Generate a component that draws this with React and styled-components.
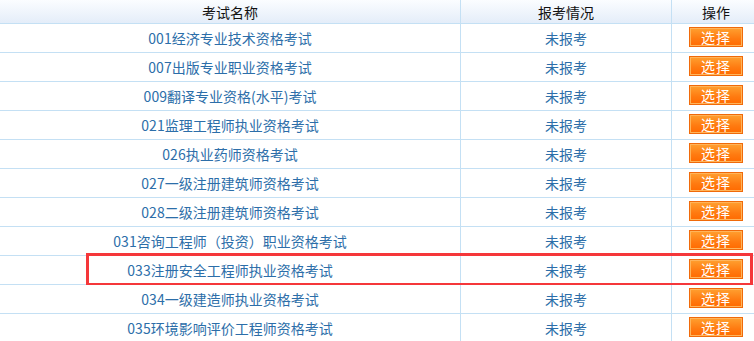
import React from "react";
import styled, { createGlobalStyle } from "styled-components";

const exams = [
  "001经济专业技术资格考试",
  "007出版专业职业资格考试",
  "009翻译专业资格(水平)考试",
  "021监理工程师执业资格考试",
  "026执业药师资格考试",
  "027一级注册建筑师资格考试",
  "028二级注册建筑师资格考试",
  "031咨询工程师（投资）职业资格考试",
  "033注册安全工程师执业资格考试",
  "034一级建造师执业资格考试",
  "035环境影响评价工程师资格考试",
];

export default function App() {
  return (
    <>
      <GlobalStyle />
      <Table>
        <Row $head>
          <Cell>考试名称</Cell>
          <Cell>报考情况</Cell>
          <Cell>操作</Cell>
        </Row>
        {exams.map((name, i) => (
          <Row key={name}>
            <Cell $link>{name}</Cell>
            <Cell $link>未报考</Cell>
            <Cell>
              <PickButton>选择</PickButton>
            </Cell>
            {i === 8 && <Highlight />}
          </Row>
        ))}
      </Table>
    </>
  );
}

const GlobalStyle = createGlobalStyle`
  html, body {
    margin: 0;
    padding: 0;
    background: #fff;
    overflow: hidden;
  }
  body {
    font-family: "Noto Sans CJK SC", "Liberation Sans", sans-serif;
    font-size: 14px;
  }
`;

const Table = styled.div`
  width: 760px;
  display: flex;
  flex-direction: column;
`;

const Row = styled.div`
  position: relative;
  display: grid;
  grid-template-columns: 460px 211px 89px;
  height: ${(p) => (p.$head ? "23px" : "28px")};
  border-bottom: 1px solid #c4e0f4;
  background: ${(p) =>
    p.$head ? "linear-gradient(#fbfdff, #e4edf9)" : "#fff"};
  color: ${(p) => (p.$head ? "#111" : "#2c6ea9")};
`;

const Cell = styled.div`
  display: flex;
  align-items: center;
  justify-content: center;
  white-space: nowrap;
  line-height: 14px;
  color: ${(p) => (p.$link ? "#2c6ea9" : "inherit")};
  & + & {
    border-left: 1px solid #c4e0f4;
  }
`;

const PickButton = styled.button`
  align-self: flex-start;
  width: 54px;
  height: 20px;
  margin-top: 3px;
  padding: 0;
  border: 1px solid #f06a0a;
  box-shadow: inset 0 0 0 1px #ffb45a;
  background: linear-gradient(#ffa030, #ff7a10 60%, #ff6a00);
  color: #fff;
  font-family: "Noto Sans CJK SC", sans-serif;
  font-size: 14px;
  line-height: 18px;
  letter-spacing: 1px;
  cursor: pointer;
`;

const Highlight = styled.div`
  position: absolute;
  left: 86px;
  top: -3px;
  width: 661px;
  height: 27px;
  border: 3px solid #f5373a;
  pointer-events: none;
`;
